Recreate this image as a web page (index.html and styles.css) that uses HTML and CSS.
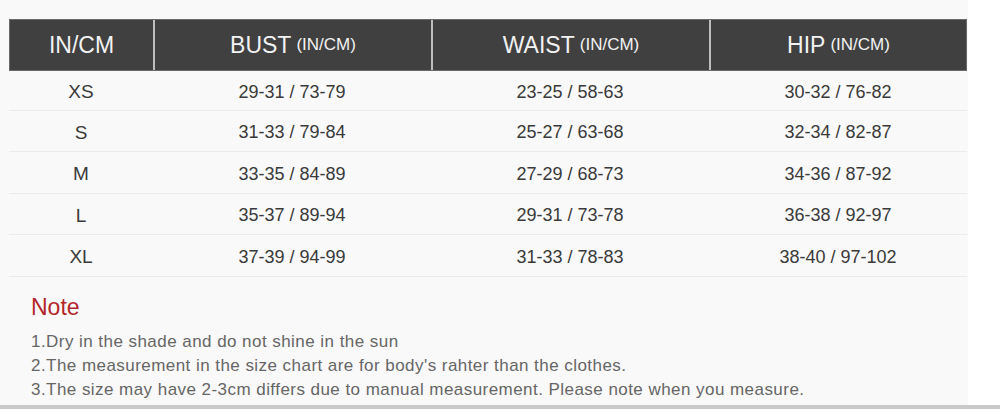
FILE: index.html
```html
<!DOCTYPE html>
<html>
<head>
<meta charset="utf-8">
<link rel="stylesheet" href="styles.css">
</head>
<body>
<div class="page">
  <div class="sheet">
    <div class="chart">
      <div class="row head">
        <div class="cell">IN/CM</div>
        <div class="cell">BUST <span class="unit">(IN/CM)</span></div>
        <div class="cell">WAIST <span class="unit">(IN/CM)</span></div>
        <div class="cell">HIP <span class="unit">(IN/CM)</span></div>
      </div>
      <div class="row r40">
        <div class="cell size">XS</div>
        <div class="cell">29-31 / 73-79</div>
        <div class="cell">23-25 / 58-63</div>
        <div class="cell">30-32 / 76-82</div>
      </div>
      <div class="row r41">
        <div class="cell size">S</div>
        <div class="cell">31-33 / 79-84</div>
        <div class="cell">25-27 / 63-68</div>
        <div class="cell">32-34 / 82-87</div>
      </div>
      <div class="row r42">
        <div class="cell size">M</div>
        <div class="cell">33-35 / 84-89</div>
        <div class="cell">27-29 / 68-73</div>
        <div class="cell">34-36 / 87-92</div>
      </div>
      <div class="row r41">
        <div class="cell size">L</div>
        <div class="cell">35-37 / 89-94</div>
        <div class="cell">29-31 / 73-78</div>
        <div class="cell">36-38 / 92-97</div>
      </div>
      <div class="row r42">
        <div class="cell size">XL</div>
        <div class="cell">37-39 / 94-99</div>
        <div class="cell">31-33 / 78-83</div>
        <div class="cell">38-40 / 97-102</div>
      </div>
    </div>
    <div class="note">
      <div class="note-title">Note</div>
      <p>1.Dry in the shade and do not shine in the sun</p>
      <p>2.The measurement in the size chart are for body's rahter than the clothes.</p>
      <p>3.The size may have 2-3cm differs due to manual measurement. Please note when you measure.</p>
    </div>
  </div>
  <div class="rule"></div>
</div>
</body>
</html>
```
FILE: styles.css
```css
html, body {
  margin: 0;
  padding: 0;
  background: #ffffff;
}
body {
  font-family: "Liberation Sans", Arial, sans-serif;
  width: 1000px;
  height: 409px;
  overflow: hidden;
}
.page {
  display: flex;
  flex-direction: column;
  height: 409px;
}
.sheet {
  width: 968px;
  height: 405px;
  background: #f9f9f9;
  box-sizing: border-box;
  padding: 19px 0 0 9px;
}
.chart {
  width: 958px;
}
.row {
  display: grid;
  grid-template-columns: 144px 278px 278px 258px;
  align-items: center;
  border-bottom: 1px solid #ebebeb;
  box-sizing: border-box;
  color: #3a3a3a;
  font-size: 18px;
  padding-top: 3px;
}
.r40 { height: 40px; }
.r41 { height: 41px; }
.r42 { height: 42px; }
.row.head {
  height: 52px;
  padding-top: 0;
  grid-template-columns: 143px 278px 278px 257px;
  background: #404040;
  color: #f2f2f2;
  font-size: 23px;
  border: 1px solid #6a6a6a;
}
.row.head .cell {
  height: 100%;
  display: flex;
  align-items: center;
  justify-content: center;
  box-sizing: border-box;
}
.row.head .cell + .cell {
  border-left: 2px solid #bdbdbd;
}
.unit {
  font-size: 17px;
  margin-left: 5px;
}
.cell {
  text-align: center;
}
.cell.size {
  font-size: 19px;
}
.note {
  padding: 18px 0 0 22px;
}
.note-title {
  color: #b3262b;
  font-size: 23px;
  line-height: 24px;
  margin-bottom: 11px;
}
.note p {
  margin: 0;
  color: #666666;
  font-size: 17px;
  line-height: 24px;
  letter-spacing: 0.45px;
}
.rule {
  height: 4px;
  background: #c9c9c9;
  width: 1000px;
}
```
